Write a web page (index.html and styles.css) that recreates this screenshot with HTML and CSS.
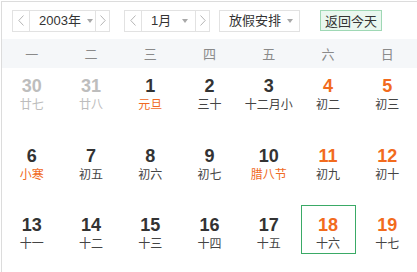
FILE: index.html
```html
<!DOCTYPE html>
<html>
<head>
    <meta charset="utf-8">
    <link rel="stylesheet" href="styles.css">
</head>
<body>
    <div class="calendar">
        <div class="toolbar">
            <div class="picker year-picker">
                <span class="arrow"><svg width="6" height="11" viewBox="0 0 6 11"><polyline points="5.5,0.5 0.8,5.5 5.5,10.5" /></svg></span>
                <span class="value">2003年<i class="caret"></i></span>
                <span class="arrow"><svg width="6" height="11" viewBox="0 0 6 11"><polyline points="0.5,0.5 5.2,5.5 0.5,10.5" /></svg></span>
            </div>
            <div class="picker month-picker">
                <span class="arrow"><svg width="6" height="11" viewBox="0 0 6 11"><polyline points="5.5,0.5 0.8,5.5 5.5,10.5" /></svg></span>
                <span class="value">1月<i class="caret"></i></span>
                <span class="arrow"><svg width="6" height="11" viewBox="0 0 6 11"><polyline points="0.5,0.5 5.2,5.5 0.5,10.5" /></svg></span>
            </div>
            <div class="picker holiday-picker">
                <span class="value">放假安排<i class="caret"></i></span>
            </div>
            <button class="today-btn">返回今天</button>
        </div>

        <div class="weekdays">
            <span>一</span><span>二</span><span>三</span><span>四</span><span>五</span><span>六</span><span>日</span>
        </div>

        <div class="days" id="days"></div>
    </div>

    <script>
const days = [
  { d: 30, l: "廿七", other: true },
  { d: 31, l: "廿八", other: true },
  { d: 1, l: "元旦", holiday: true },
  { d: 2, l: "三十" },
  { d: 3, l: "十二月小" },
  { d: 4, l: "初二" },
  { d: 5, l: "初三" },
  { d: 6, l: "小寒", holiday: true },
  { d: 7, l: "初五" },
  { d: 8, l: "初六" },
  { d: 9, l: "初七" },
  { d: 10, l: "腊八节", holiday: true },
  { d: 11, l: "初九" },
  { d: 12, l: "初十" },
  { d: 13, l: "十一" },
  { d: 14, l: "十二" },
  { d: 15, l: "十三" },
  { d: 16, l: "十四" },
  { d: 17, l: "十五" },
  { d: 18, l: "十六", today: true },
  { d: 19, l: "十七" }
];

const daysEl = document.getElementById("days");

days.forEach(function (item, i) {
  const cell = document.createElement("div");
  cell.className = "day";
  const box = document.createElement("div");
  box.className = "box";
  if (item.other) box.classList.add("other");
  if (i % 7 >= 5 && !item.other) box.classList.add("weekend");
  if (item.today) box.classList.add("today");

  const num = document.createElement("div");
  num.className = "num";
  num.textContent = item.d;

  const lunar = document.createElement("div");
  lunar.className = "lunar";
  if (item.holiday) lunar.classList.add("festival");
  lunar.textContent = item.l;

  box.appendChild(num);
  box.appendChild(lunar);
  cell.appendChild(box);
  daysEl.appendChild(cell);
});
    </script>
</body>
</html>
```

FILE: styles.css
```css
body {
    margin: 0;
    background-color: #fff;
    font-family: "Liberation Sans", Arial, "Noto Sans CJK SC", sans-serif;
    overflow: hidden;
}

.calendar {
    margin: 1px 0 0 1px;
    min-height: 270px;
    border-top: 1px solid #dcdcdc;
    border-left: 1px solid #dcdcdc;
}

.toolbar {
    display: flex;
    align-items: center;
    height: 37px;
    padding: 0 0 0 10px;
    box-sizing: border-box;
}

.picker {
    display: flex;
    flex-shrink: 0;
    height: 22px;
    box-sizing: border-box;
    border: 1px solid #e2e2e2;
    color: #333;
    font-size: 13px;
    white-space: nowrap;
}

.year-picker {
    width: 98px;
}

.month-picker {
    width: 86px;
    margin-left: 14px;
}

.holiday-picker {
    width: 81px;
    margin-left: 9px;
}

.arrow {
    display: flex;
    align-items: center;
    justify-content: center;
    width: 16px;
}

.year-picker .arrow:last-child,
.month-picker .arrow:last-child {
    width: 13px;
}

.arrow svg polyline {
    fill: none;
    stroke: #b5b5b5;
    stroke-width: 1;
}

.value {
    flex: 1;
    display: flex;
    align-items: center;
    border-left: 1px solid #e2e2e2;
    border-right: 1px solid #e2e2e2;
    padding-left: 9px;
    line-height: 20px;
}

.holiday-picker .value {
    border: none;
    padding-left: 9px;
}

.caret {
    display: inline-block;
    width: 0;
    height: 0;
    margin-left: 6px;
    border-top: 4px solid #a8a8a8;
    border-left: 3.5px solid transparent;
    border-right: 3.5px solid transparent;
}

.month-picker .caret {
    margin-left: 11px;
}

.holiday-picker .caret {
    margin-left: 6px;
}

.today-btn {
    flex-shrink: 0;
    margin-left: 20px;
    height: 21px;
    width: 62px;
    padding: 0;
    border: 1px solid #9fd8b5;
    background-color: #eaf7ef;
    color: #333;
    font-family: "Noto Sans CJK SC", sans-serif;
    font-size: 13px;
    line-height: 19px;
}

.weekdays {
    display: grid;
    grid-template-columns: repeat(7, 1fr);
    height: 29px;
    align-items: center;
    background-color: #f5f7f9;
    color: #8a8a8a;
    font-family: "Noto Sans CJK SC", sans-serif;
    font-size: 13px;
    text-align: center;
}

.days {
    display: grid;
    grid-template-columns: repeat(7, 1fr);
    grid-auto-rows: 49px;
    row-gap: 20.5px;
    margin-top: -2px;
}

.day {
    display: flex;
    justify-content: center;
}

.box {
    width: 55px;
    height: 49px;
    box-sizing: border-box;
    border: 1px solid transparent;
    padding-top: 9px;
    text-align: center;
}

.num {
    font-size: 18px;
    font-weight: bold;
    line-height: 20px;
    color: #333;
}

.lunar {
    font-family: "Noto Sans CJK SC", sans-serif;
    font-size: 12px;
    line-height: 16px;
    color: #444;
}

.lunar.festival {
    color: #f06a24;
}

.box.weekend .num {
    color: #f26b1d;
}

.box.other .num {
    color: #bdbdbd;
}

.box.other .lunar {
    color: #bdbdbd;
}

.box.today {
    border: 1px solid #3aaa66;
}
```
